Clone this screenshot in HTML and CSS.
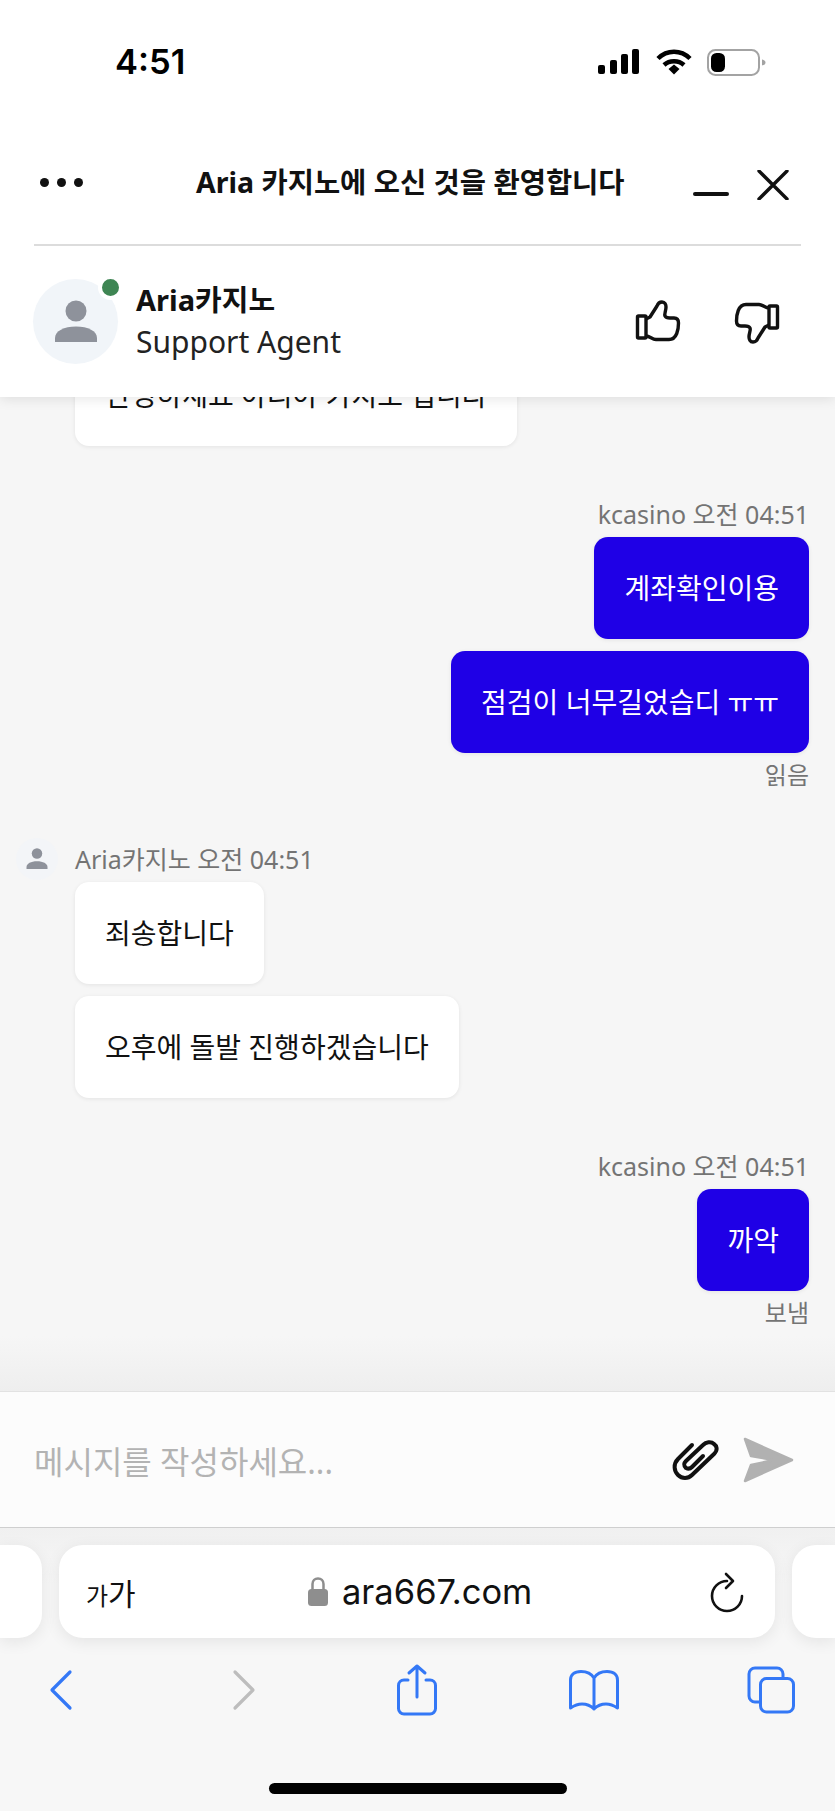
FILE: index.html
```html
<!DOCTYPE html>
<html lang="ko">
<head>
  <meta charset="UTF-8" />
  <meta name="viewport" content="width=device-width, initial-scale=1.0"/>
  <title>Aria 카지노 채팅</title>
  <link rel="stylesheet" href="styles.css">
</head>
<body>
<div class="page">

  <div class="status-bar">
    <span class="time">4:51</span>
    <div class="status-icons">
      <svg class="signal" width="41" height="25" viewBox="0 0 41 25" fill="#000">
        <rect x="0" y="16" width="7" height="9" rx="2"/>
        <rect x="12" y="11" width="7" height="14" rx="2"/>
        <rect x="23" y="5" width="7" height="20" rx="2"/>
        <rect x="34" y="0" width="7" height="25" rx="2"/>
      </svg>
      <svg class="wifi" width="36" height="26" viewBox="0 0 36 26" fill="none" stroke="#000" stroke-width="4.5">
        <path d="M2 9.5 C11 0.5 25 0.5 34 9.5"/>
        <path d="M8 16 C13.5 11 22.5 11 28 16"/>
        <path d="M12.5 20 L18 15.5 L23.5 20 L18 25.5 Z" fill="#000" stroke="none"/>
      </svg>
      <svg class="battery" width="59" height="27" viewBox="0 0 59 27">
        <rect x="1" y="1" width="51" height="25" rx="7.5" fill="#fff" stroke="#a3a3a3" stroke-width="2"/>
        <rect x="4" y="4" width="14" height="19" rx="5.5" fill="#000"/>
        <path d="M55 10.5 C57.5 11 58.5 12 58.5 13.5 C58.5 15 57.5 16 55 16.5 Z" fill="#a3a3a3"/>
      </svg>
    </div>
  </div>

  <div class="chat-header">
    <div class="title-row">
      <div class="dots"><i></i><i></i><i></i></div>
      <h1 class="chat-title">Aria 카지노에 오신 것을 환영합니다</h1>
      <div class="window-btns">
        <svg width="36" height="30" viewBox="0 0 36 30"><rect x="0" y="22" width="36" height="4" rx="2" fill="#111"/></svg>
        <svg width="32" height="30" viewBox="0 0 32 30" fill="none" stroke="#111" stroke-width="3.4" stroke-linecap="round"><path d="M2 1 L30 29 M30 1 L2 29"/></svg>
      </div>
    </div>
    <div class="agent-row">
      <div class="avatar">
        <svg width="44" height="44" viewBox="0 0 44 44" fill="#8e929b">
          <circle cx="22" cy="11" r="10.5"/>
          <path d="M1 42 V38 C1 31 10 26.500 22 26.500 C34 26.500 43 31 43 38 V42 Z"/>
        </svg>
        <span class="online"></span>
      </div>
      <div class="agent-info">
        <div class="agent-name">Aria카지노</div>
        <div class="agent-role">Support Agent</div>
      </div>
      <div class="rate-btns">
        <svg width="46" height="44" viewBox="0 0 46 44" fill="none" stroke="#111" stroke-width="3.4" stroke-linejoin="round">
          <rect x="2.500" y="17" width="8.500" height="22" rx="1"/>
          <path d="M11 20 L15 18 L22 7 C23 4 25 3 27 3 C30 3 31 6 31 8 C31 12 29 15 30 17 C31 19 33 19 35 19 L39 19 C42 19 43.500 21 43.500 24 C43.500 30 42 40.500 34 40.500 L21 40.500 C17 40.500 15 37 11 37"/>
        </svg>
        <svg class="thumb-down" width="46" height="44" viewBox="0 0 46 44" fill="none" stroke="#111" stroke-width="3.4" stroke-linejoin="round">
          <g transform="rotate(180 23 22)">
            <rect x="2.500" y="17" width="8.500" height="22" rx="1"/>
            <path d="M11 20 L15 18 L22 7 C23 4 25 3 27 3 C30 3 31 6 31 8 C31 12 29 15 30 17 C31 19 33 19 35 19 L39 19 C42 19 43.500 21 43.500 24 C43.500 30 42 40.500 34 40.500 L21 40.500 C17 40.500 15 37 11 37"/>
          </g>
        </svg>
      </div>
    </div>
  </div>

  <div class="chat-body">
    <div class="msg-group agent">
      <div class="bubble">안녕하세요 아리아 카지노 입니다</div>
    </div>

    <div class="msg-group user">
      <div class="meta">kcasino 오전 04:51</div>
      <div class="bubble">계좌확인이용</div>
      <div class="bubble">점검이 너무길었습디 ㅠㅠ</div>
      <div class="msg-status">읽음</div>
    </div>

    <div class="msg-group agent">
      <div class="meta">
        <span class="mini-avatar">
          <svg width="22" height="22" viewBox="0 0 44 44" fill="#8e929b">
            <circle cx="22" cy="11" r="10.5"/>
            <path d="M1 42 V38 C1 31 10 26.500 22 26.500 C34 26.500 43 31 43 38 V42 Z"/>
          </svg>
        </span>
        Aria카지노 오전 04:51
      </div>
      <div class="bubble">죄송합니다</div>
      <div class="bubble">오후에 돌발 진행하겠습니다</div>
    </div>

    <div class="msg-group user">
      <div class="meta">kcasino 오전 04:51</div>
      <div class="bubble">까악</div>
      <div class="msg-status">보냄</div>
    </div>
  </div>

  <div class="composer">
    <span class="placeholder">메시지를 작성하세요...</span>
    <svg class="clip" width="52" height="46" viewBox="0 0 52 46" fill="none" stroke="#111" stroke-width="4" stroke-linecap="round">
      <path d="M22 6 L8 20 C3 25 4 32 8 36 C12 40 18 40 22 36 L44 15 C48 11 47 7 44 5 C41 2 36 3 33 6 L16 22 C13 25 14 27 16 29 C18 30 20 30 22 28 L33 17"/>
    </svg>
    <svg class="send" width="52" height="48" viewBox="0 0 52 48" fill="#b1b1b1" stroke="#b1b1b1" stroke-width="2.500" stroke-linejoin="round">
      <path d="M3 3 L50 24 L3 45 L9 29 L32 24 L9 20 Z"/>
    </svg>
  </div>

  <div class="browser-bar">
    <div class="url-row">
      <div class="tab-pill prev"></div>
      <div class="url-pill">
        <span class="aa"><small>가</small>가</span>
        <div class="address">
          <svg width="20" height="29" viewBox="0 0 20 29">
            <path d="M4.500 13 V7 C4.500 3.500 7 1.500 10 1.500 C13 1.500 15.500 3.500 15.500 7 V13" fill="none" stroke="#8e8e8e" stroke-width="2.500"/>
            <rect x="0" y="12" width="20" height="17" rx="3.500" fill="#8e8e8e"/>
          </svg>
          <span>ara667.com</span>
        </div>
        <svg class="reload" width="38" height="42" viewBox="0 0 38 42" fill="none" stroke="#111" stroke-width="2.600" stroke-linecap="round" stroke-linejoin="round">
          <path d="M18 10 A15 15 0 1 0 33 25"/>
          <path d="M17 3 L24 10 L17 17"/>
        </svg>
      </div>
      <div class="tab-pill next"></div>
    </div>

    <div class="nav-row">
      <svg class="nav-back" width="24" height="42" viewBox="0 0 24 42" fill="none" stroke="#3478f6" stroke-width="3.200" stroke-linecap="round" stroke-linejoin="round"><path d="M21 3 L3 21 L21 39"/></svg>
      <svg class="nav-forward" width="24" height="42" viewBox="0 0 24 42" fill="none" stroke="#bdbdbd" stroke-width="3.200" stroke-linecap="round" stroke-linejoin="round"><path d="M3 3 L21 21 L3 39"/></svg>
      <svg class="nav-share" width="44" height="54" viewBox="0 0 44 54" fill="none" stroke="#3478f6" stroke-width="3" stroke-linecap="round" stroke-linejoin="round">
        <path d="M13 17 H9 A5.500 5.500 0 0 0 3.500 22.500 V45.500 A5.500 5.500 0 0 0 9 51 H35 A5.500 5.500 0 0 0 40.500 45.500 V22.500 A5.500 5.500 0 0 0 35 17 H31"/>
        <path d="M22 34 V3 M14 10 L22 3 L30 10"/>
      </svg>
      <svg class="nav-book" width="54" height="44" viewBox="0 0 54 44" fill="none" stroke="#3478f6" stroke-width="3" stroke-linecap="round" stroke-linejoin="round">
        <path d="M27 10 C24 5 19 3.500 14 3.500 C7 3.500 3.500 7 3.500 12 V40 C8 37 12 36 15 36 C20 36 24 38 27 41 C30 38 34 36 39 36 C42 36 46 37 50.500 40 V12 C50.500 7 47 3.500 40 3.500 C35 3.500 30 5 27 10 Z M27 10 V41"/>
      </svg>
      <svg class="nav-tabs" width="50" height="50" viewBox="0 0 50 50" fill="none" stroke="#3478f6" stroke-width="3" stroke-linecap="round">
        <rect x="14.500" y="13.500" width="33" height="33.500" rx="6"/>
        <path d="M13 37 H9 A6 6 0 0 1 3 31 V9 A6 6 0 0 1 9 3 H31 A6 6 0 0 1 37 9 V13"/>
      </svg>
    </div>

    <div class="home-indicator"></div>
  </div>

</div>
</body>
</html>
```

FILE: styles.css
```css
body {
  margin: 0;
  font-family: "Noto Sans", "Noto Sans CJK KR", sans-serif;
  color: #111;
  background: #f6f6f6;
}
.page {
  width: 835px;
  height: 1811px;
  display: flex;
  flex-direction: column;
  overflow: hidden;
}

/* phone status bar */
.status-bar {
  height: 120px;
  flex: none;
  box-sizing: border-box;
  padding: 44px 69px 0 115px;
  display: flex;
  justify-content: space-between;
  align-items: flex-start;
  background: #fff;
  position: relative;
  z-index: 3;
}
.time {
  font-family: Inter, "Noto Sans", sans-serif;
  font-weight: 600;
  font-size: 34.5px;
  line-height: 36px;
  color: #000;
}
.status-icons {
  display: flex;
  align-items: flex-start;
  margin-top: 5px;
}
.wifi {
  margin-left: 17px;
}
.battery {
  margin-left: 15px;
}

/* chat header */
.chat-header {
  flex: none;
  height: 277px;
  box-sizing: border-box;
  background: #fff;
  box-shadow: 0 2px 12px rgba(0,0,0,0.1);
  position: relative;
  z-index: 2;
}
.title-row {
  height: 126px;
  margin: 0 34px;
  box-sizing: border-box;
  border-bottom: 2px solid #dcdcdc;
  display: flex;
  align-items: center;
}
.dots {
  display: flex;
  gap: 8px;
  margin-left: 6px;
}
.dots i {
  width: 9px;
  height: 9px;
  border-radius: 50%;
  background: #111;
}
.chat-title {
  margin: 0 0 0 113px;
  font-size: 28.5px;
  font-weight: 700;
  line-height: 38px;
  white-space: nowrap;
}
.window-btns {
  margin-left: auto;
  margin-right: 12px;
  margin-top: 6px;
  display: flex;
  gap: 28px;
}
.agent-row {
  height: 151px;
  padding: 0 55px 0 33px;
  display: flex;
  align-items: center;
}
.avatar {
  width: 85px;
  height: 85px;
  border-radius: 50%;
  background: #f1f5f9;
  display: flex;
  align-items: center;
  justify-content: center;
  position: relative;
  flex: none;
}
.online {
  position: absolute;
  right: -5px;
  top: -4px;
  width: 17px;
  height: 17px;
  border-radius: 50%;
  background: #3e8553;
  border: 4px solid #fff;
}
.agent-info {
  margin-left: 18px;
}
.agent-name {
  font-size: 29px;
  font-weight: 700;
  line-height: 40px;
}
.agent-role {
  font-size: 30px;
  line-height: 44px;
  color: #222;
}
.rate-btns {
  margin-left: auto;
  display: flex;
  gap: 53px;
}
.thumb-down {
  margin-top: 2px;
}

/* messages */
.chat-body {
  flex: 1;
  min-height: 0;
  overflow: hidden;
  position: relative;
  box-sizing: border-box;
  padding: 0 26px 64px 16px;
  display: flex;
  flex-direction: column;
  justify-content: flex-end;
  background: #f6f6f6;
}
.chat-body::after {
  content: "";
  position: absolute;
  left: 0;
  right: 0;
  bottom: 0;
  height: 55px;
  background: linear-gradient(to bottom, rgba(238,238,238,0), #eeeeee);
}
.msg-group {
  flex: none;
  display: flex;
  flex-direction: column;
}
.msg-group.user {
  align-items: flex-end;
  margin-top: 56px;
}
.msg-group.agent {
  align-items: flex-start;
  margin-top: 58px;
}
.meta {
  font-size: 25px;
  line-height: 24px;
  color: #747474;
  margin-bottom: 11px;
  display: flex;
  align-items: center;
  white-space: nowrap;
}
.mini-avatar {
  width: 42px;
  height: 42px;
  border-radius: 50%;
  background: #f3f5f8;
  margin: -9px 17px -9px 0;
  display: flex;
  align-items: center;
  justify-content: center;
}
.bubble {
  font-size: 28px;
  line-height: 36px;
  padding: 33px 30px;
  border-radius: 14px;
  white-space: nowrap;
  box-shadow: 0 1px 4px rgba(0,0,0,0.08);
}
.bubble + .bubble {
  margin-top: 12px;
}
.agent .bubble {
  background: #fff;
  color: #111;
  margin-left: 59px;
}
.user .bubble {
  background: #1f00e6;
  color: #fff;
}
.msg-status {
  font-size: 24px;
  line-height: 29px;
  color: #747474;
  margin-top: 7px;
}

/* message box */
.composer {
  flex: none;
  height: 137px;
  box-sizing: border-box;
  padding: 0 41px 0 34px;
  display: flex;
  align-items: center;
  background: #fcfcfc;
  border-top: 1px solid #e2e2e2;
  border-bottom: 1px solid #cfcfcf;
}
.placeholder {
  font-size: 32px;
  color: #b3b3b3;
}
.clip {
  margin-left: auto;
  margin-top: 4px;
}
.send {
  margin-left: 20px;
}

/* safari toolbar */
.browser-bar {
  flex: none;
  height: 283px;
  display: flex;
  flex-direction: column;
  background: linear-gradient(to bottom, #f0f0f0, #f7f7f7 20%);
}
.url-row {
  display: flex;
  gap: 17px;
  margin-top: 17px;
}
.tab-pill,
.url-pill {
  height: 93px;
  background: #fff;
  box-shadow: 0 4px 16px rgba(0,0,0,0.08);
}
.tab-pill.prev {
  width: 42px;
  border-radius: 0 24px 24px 0;
}
.tab-pill.next {
  flex: 1;
  border-radius: 24px 0 0 24px;
}
.url-pill {
  width: 716px;
  flex: none;
  box-sizing: border-box;
  padding: 0 28px 0 27px;
  border-radius: 24px;
  display: flex;
  align-items: center;
  position: relative;
}
.aa {
  font-size: 30px;
}
.aa small {
  font-size: 24px;
}
.address {
  position: absolute;
  left: 249px;
  display: flex;
  align-items: center;
  gap: 14px;
  font-family: Inter, "Noto Sans", sans-serif;
  font-size: 34.5px;
}
.reload {
  margin-left: auto;
}
.nav-row {
  display: flex;
  align-items: center;
  height: 54px;
  margin-top: 25px;
  padding-left: 49px;
}
.nav-forward {
  margin-left: 159px;
}
.nav-share {
  margin-left: 139px;
}
.nav-book {
  margin-left: 128px;
}
.nav-tabs {
  margin-left: 125px;
}
.home-indicator {
  width: 298px;
  height: 11px;
  border-radius: 6px;
  background: #000;
  margin: 66px auto 0;
}
```
